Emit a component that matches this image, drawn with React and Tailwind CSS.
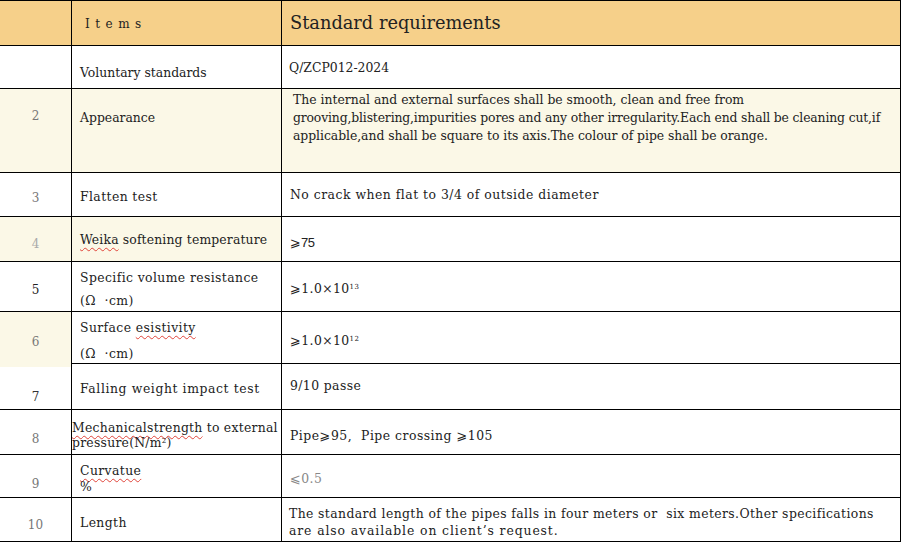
import React from "react";

const serif = "font-['DejaVu_Serif',serif]";
const wavy = "underline decoration-wavy decoration-[#e0443a] decoration-1 underline-offset-[3px]";

const Row = ({ h, children }) => (
  <div className={`grid grid-cols-[72px_210px_1fr] border-b border-black ${h}`}>{children}</div>
);

const Num = ({ children, className = "" }) => (
  <div className={`border-r border-black text-center text-[12px] ${className}`}>{children}</div>
);

const Item = ({ children, className = "" }) => (
  <div className={`border-r border-black text-[12.4px] leading-4 text-[#222] whitespace-nowrap ${className}`}>
    {children}
  </div>
);

const Std = ({ children, className = "" }) => (
  <div className={`text-[12.4px] leading-4 text-[#222] whitespace-nowrap ${className}`}>{children}</div>
);

const Ge = () => <span className="font-['DejaVu_Sans',sans-serif] text-[13px]">⩾</span>;

export default function App() {
  return (
    <div className={`w-[901px] h-[542px] bg-white border-t border-r border-black overflow-hidden ${serif}`}>
      {/* Header */}
      <Row h="h-[45px] bg-[#f6d08a]">
        <div className="border-r border-black" />
        <div className="border-r border-black pt-[15px] pl-[13px] text-[12px] leading-4 text-[#222] tracking-[5.5px]">
          Items
        </div>
        <div className="pt-[10px] pl-[8px] text-[17.8px] leading-6 text-[#222]">Standard requirements</div>
      </Row>

      {/* 1 */}
      <Row h="h-[43px]">
        <Num />
        <Item className="pt-[19px] pl-[8px]">Voluntary standards</Item>
        <Std className="pt-[14px] pl-[7px] text-[11px]">Q/ZCP012-2024</Std>
      </Row>

      {/* 2 */}
      <Row h="h-[84px] bg-[#fbf8e7]">
        <Num className="pt-[19px] leading-4 text-[#777]">2</Num>
        <Item className="pt-[21px] pl-[8px]">Appearance</Item>
        <Std className="pt-[2px] pl-[11px] text-[11px] leading-[18px]">
          <div>The internal and external surfaces shall be smooth, clean and free from</div>
          <div className="tracking-[-0.15px]">
            grooving,blistering,impurities pores and any other irregularity.Each end shall be cleaning cut,if
          </div>
          <div className="tracking-[-0.05px]">
            applicable,and shall be square to its axis.The colour of pipe shall be orange.
          </div>
        </Std>
      </Row>

      {/* 3 */}
      <Row h="h-[44px]">
        <Num className="pt-[17px] leading-4 text-[#777]">3</Num>
        <Item className="pt-[16px] pl-[8px] tracking-[0.4px]">Flatten test</Item>
        <Std className="pt-[14px] pl-[8px] tracking-[0.5px]">No crack when flat to 3/4 of outside diameter</Std>
      </Row>

      {/* 4 */}
      <Row h="h-[45px]">
        <Num className="pt-[19px] leading-4 text-[#aaa] bg-[#fbf8e7]">4</Num>
        <Item className="pt-[15px] pl-[8px] bg-[#fbf8e7] tracking-[0.15px]">
          <span className={wavy}>Weika</span> softening temperature
        </Item>
        <Std className="pt-[18px] pl-[8px] font-['Liberation_Sans',sans-serif] text-[13px]">
          <Ge />
          <span className="tracking-[-0.5px]">75</span>
        </Std>
      </Row>

      {/* 5 */}
      <Row h="h-[50px]">
        <Num className="pt-[20px] leading-4 text-[#222]">5</Num>
        <Item className="pt-[4px] pl-[8px] leading-[23px] tracking-[0.4px]">
          <div>Specific volume resistance</div>
          <div>(Ω &nbsp;·cm)</div>
        </Item>
        <Std className="pt-[19px] pl-[8px] tracking-[0.4px]">
          <Ge />
          1.0×10<sup className="text-[7px] -top-[4px]">13</sup>
        </Std>
      </Row>

      {/* 6 */}
      <Row h="h-[52px]">
        <Num className="pt-[22px] leading-4 text-[#777] bg-[#fbf8e7]">6</Num>
        <Item className="pt-[3px] pl-[8px] leading-[26px] tracking-[0.4px]">
          <div>
            Surface <span className={wavy}>esistivity</span>
          </div>
          <div>(Ω &nbsp;·cm)</div>
        </Item>
        <Std className="pt-[21px] pl-[8px] tracking-[0.4px]">
          <Ge />
          1.0×10<sup className="text-[7px] -top-[4px]">12</sup>
        </Std>
      </Row>

      {/* 7 */}
      <Row h="h-[46px]">
        <Num className="pt-[25px] leading-4 text-[#333]">7</Num>
        <Item className="pt-[17px] pl-[8px] tracking-[0.6px]">Falling weight impact test</Item>
        <Std className="pt-[14px] pl-[8px] tracking-[0.4px]">9/10 passe</Std>
      </Row>

      {/* 8 */}
      <Row h="h-[45px]">
        <Num className="pt-[21px] leading-4 text-[#777]">8</Num>
        <Item className="pt-[10px] pl-0 leading-[15px] tracking-[0.25px]">
          <div>
            <span className={wavy}>Mechanicalstrength</span> to external
          </div>
          <div>
            pressure(N/m<sup className="text-[7px] -top-[4px]">2</sup>)
          </div>
        </Item>
        <Std className="pt-[18px] pl-[8px] tracking-[0.5px]">
          Pipe<Ge />
          95, &nbsp;Pipe crossing <Ge />
          105
        </Std>
      </Row>

      {/* 9 */}
      <Row h="h-[43px]">
        <Num className="pt-[21px] leading-4 text-[#777]">9</Num>
        <Item className="pt-[8px] pl-[8px] leading-4 tracking-[0.4px]">
          <div>
            <span className={wavy}>Curvatue</span>
          </div>
          <div>%</div>
        </Item>
        <Std className="pt-[16px] pl-[8px] text-[#888] tracking-[0.4px]">
          <span className="font-['DejaVu_Sans',sans-serif] text-[13px]">⩽</span>0.5
        </Std>
      </Row>

      {/* 10 */}
      <Row h="h-[44px]">
        <Num className="pt-[19px] leading-4 text-[#777]">10</Num>
        <Item className="pt-[17px] pl-[8px] tracking-[0.4px]">Length</Item>
        <Std className="pt-[7px] pl-[7px] leading-[17px]">
          <div className="tracking-[0.4px]">
            The standard length of the pipes falls in four meters or &nbsp;six meters.Other specifications
          </div>
          <div className="tracking-[0.9px]">are also available on client’s request.</div>
        </Std>
      </Row>
    </div>
  );
}
